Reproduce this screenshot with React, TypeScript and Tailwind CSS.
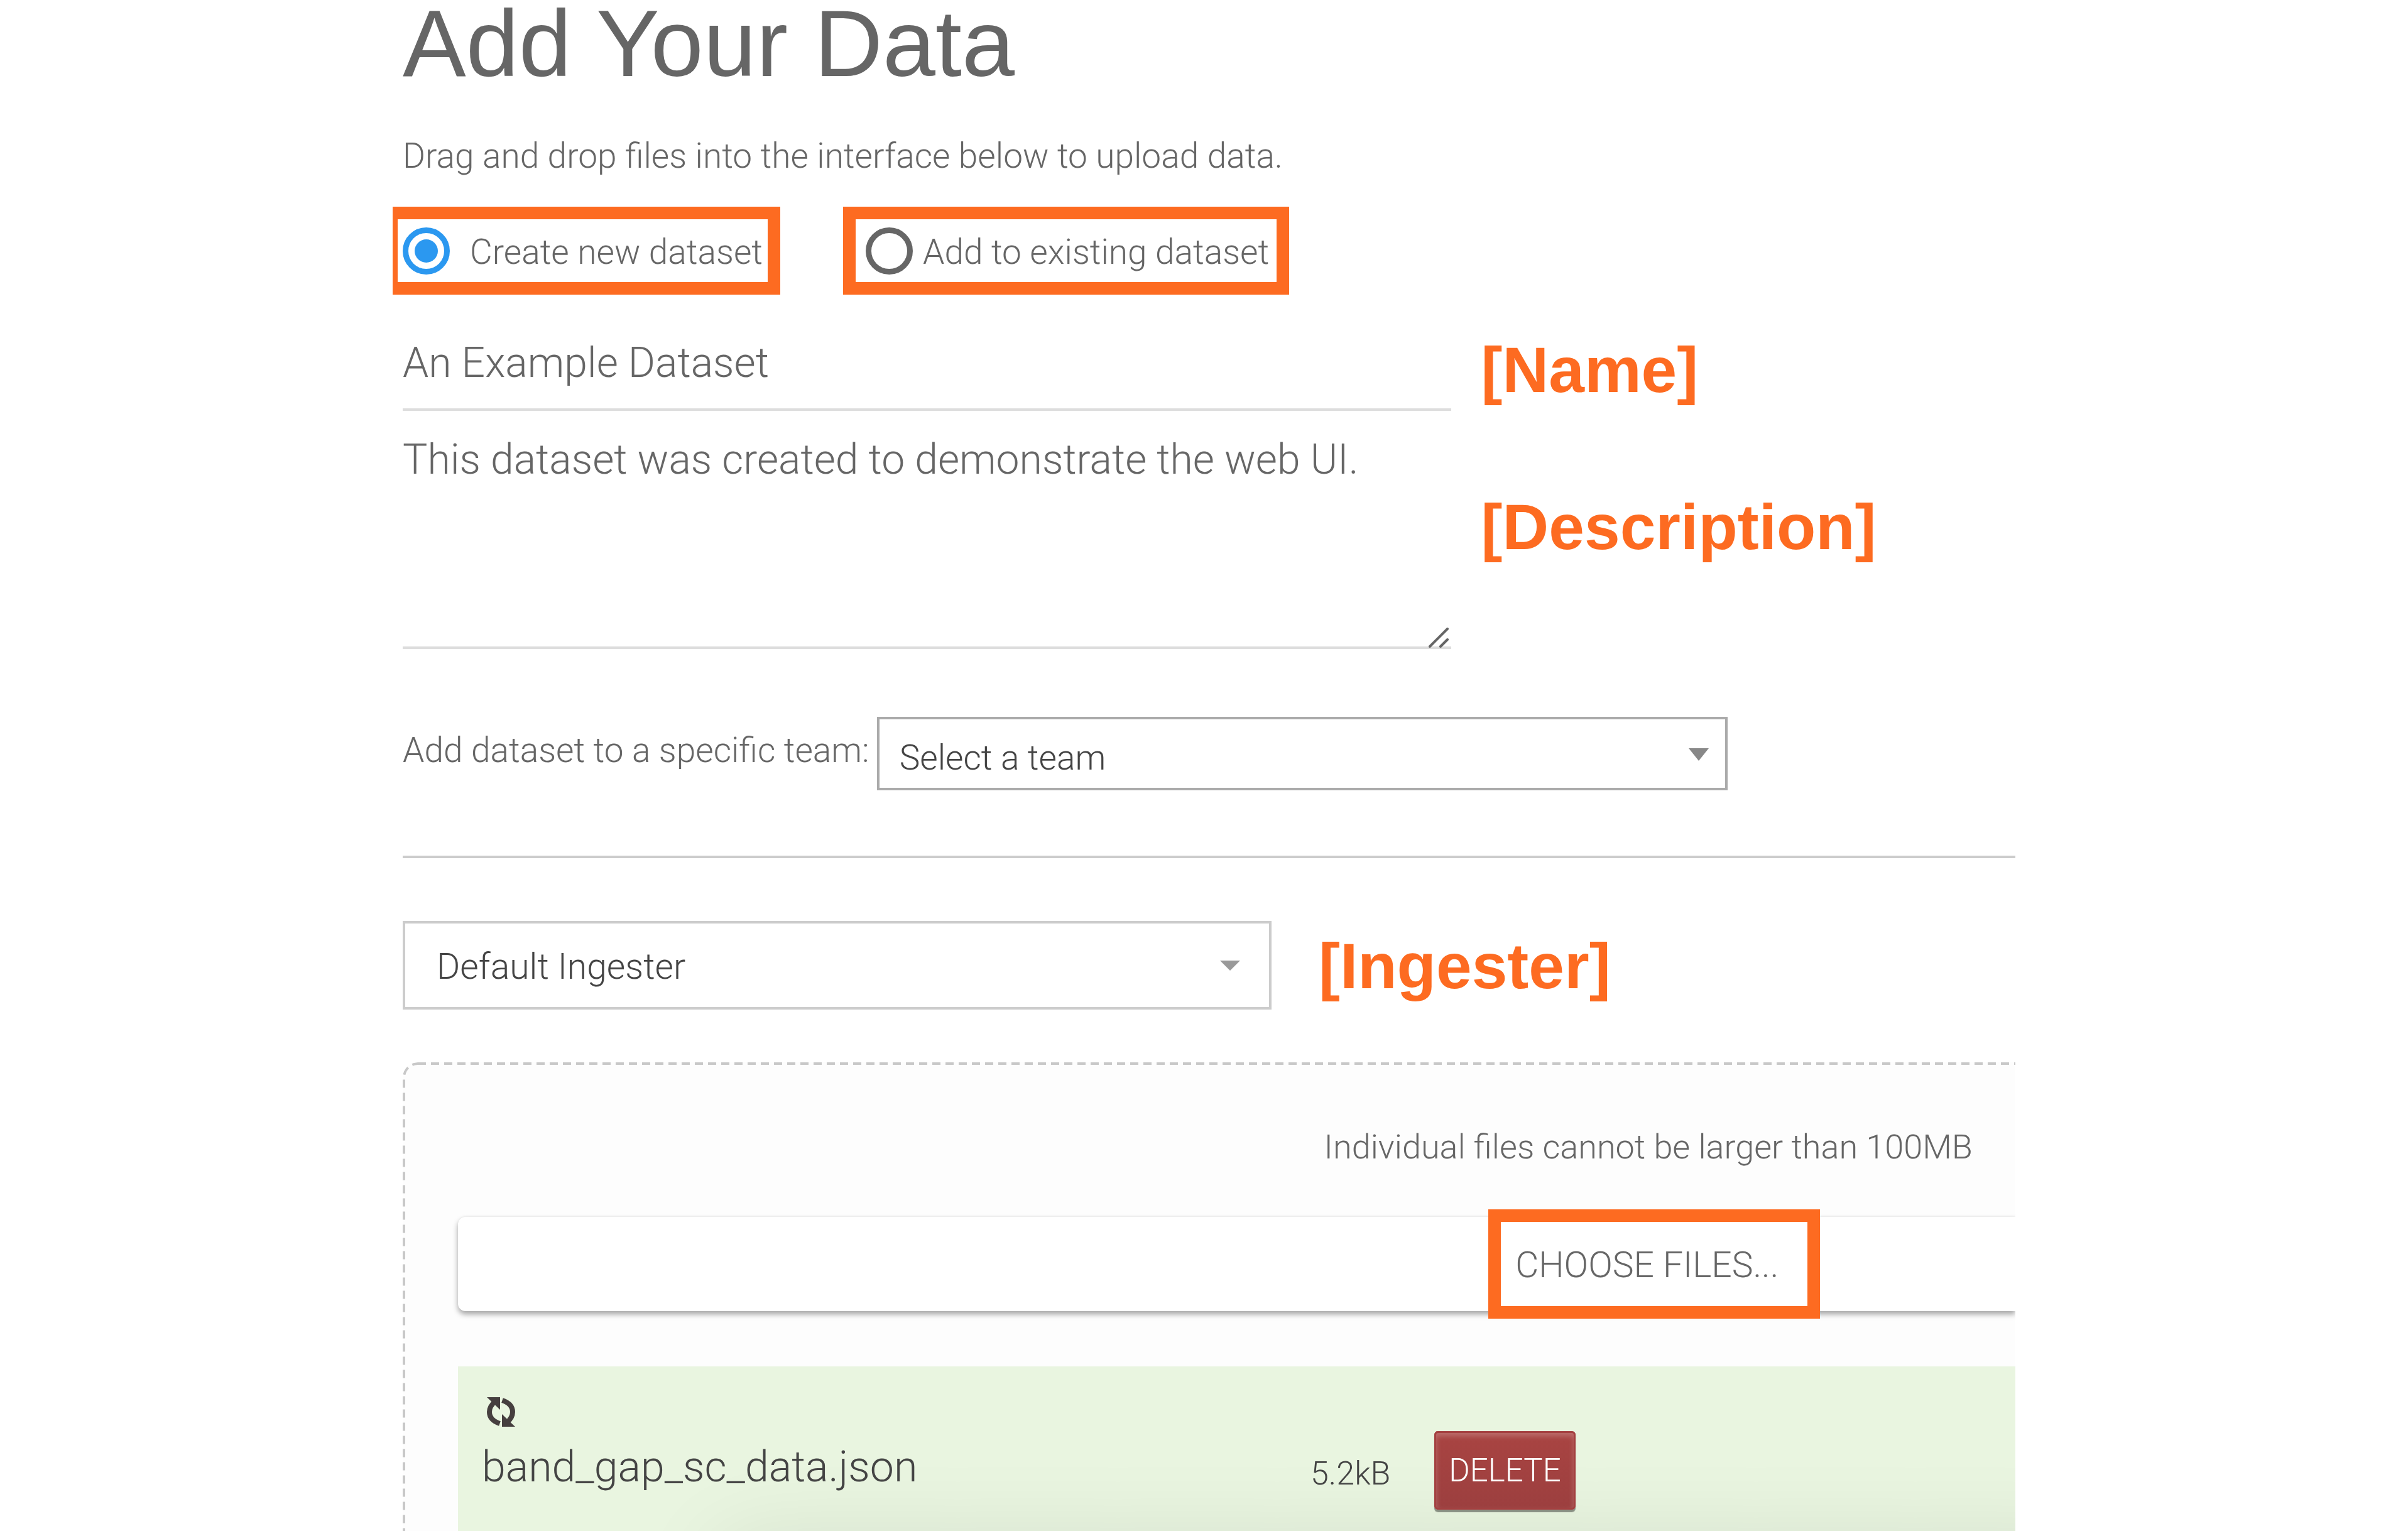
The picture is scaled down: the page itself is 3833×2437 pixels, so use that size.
import React, { useState } from "react";

function Annotation({ children, className }: { children: React.ReactNode; className: string }) {
  return (
    <span
      className={`font-['Liberation_Sans',sans-serif] text-[102px] leading-[104px] font-bold whitespace-nowrap text-[#fd6b21] ${className}`}
    >
      {children}
    </span>
  );
}

function Caret({ className, points }: { className: string; points: string }) {
  return (
    <svg
      aria-hidden="true"
      viewBox="0 0 32 20"
      className={`pointer-events-none absolute h-5 w-8 ${className}`}
    >
      <polygon points={points} fill="currentColor" />
    </svg>
  );
}

function RefreshIcon() {
  return (
    <svg aria-hidden="true" viewBox="0 0 47 47" className="h-[47px] w-[47px] text-[#463f3f]">
      <g fill="none" stroke="currentColor" strokeWidth="8">
        <path d="M21.500 42C10 38 5 31 5 23.500C5 17 8 12 14 7" />
        <path d="M25.500 5C37 9 42 16 42 23.500C42 30 39 35 33 40" />
      </g>
      <polygon points="1,0 22,0 22,20" fill="currentColor" />
      <polygon points="46,47 25,47 25,27" fill="currentColor" />
    </svg>
  );
}

const radioBase =
  "size-[75px] shrink-0 appearance-none rounded-full border-[9px] border-[#666] p-[10px] bg-clip-content checked:border-[#2b98f0] checked:bg-[#2b98f0]";

export default function App() {
  const [mode, setMode] = useState("new");
  const [name, setName] = useState("An Example Dataset");
  const [description, setDescription] = useState(
    "This dataset was created to demonstrate the web UI."
  );

  return (
    <main className="bg-white pr-[625px] pl-[641px] font-['Roboto','Liberation_Sans',sans-serif] text-[55px] leading-[64px] font-light text-[#666]">
      <h1 className="font-['Liberation_Sans',sans-serif] text-[151px] leading-[138px] font-normal">
        Add Your Data
      </h1>
      <p className="mt-[78px]">Drag and drop files into the interface below to upload data.</p>

      <div role="radiogroup" aria-label="Dataset target" className="mt-[49px] -ml-4 flex gap-[100px]">
        <label className="flex h-[140px] items-center gap-8 border-20 border-l-8 border-[#fd6b21] pr-2 pl-2 whitespace-nowrap">
          <input
            type="radio"
            name="mode"
            className={radioBase}
            checked={mode === "new"}
            onChange={() => setMode("new")}
          />
          <span className="pt-1">Create new dataset</span>
        </label>
        <label className="flex h-[140px] items-center gap-4 border-20 border-[#fd6b21] pr-3 pl-4 whitespace-nowrap">
          <input
            type="radio"
            name="mode"
            className={radioBase}
            checked={mode === "existing"}
            onChange={() => setMode("existing")}
          />
          <span className="pt-1">Add to existing dataset</span>
        </label>
      </div>

      <div className="mt-[68px] flex items-start gap-12">
        <input
          type="text"
          aria-label="Name"
          value={name}
          onChange={(e) => setName(e.target.value)}
          className="h-[117px] w-[65%] border-b-4 border-[#ddd] pb-8 text-[66px] leading-[80px] outline-none"
        />
        <Annotation className="">[Name]</Annotation>
      </div>

      <div className="flex items-start gap-12">
        <div className="relative w-[65%]">
          <textarea
            aria-label="Description"
            value={description}
            onChange={(e) => setDescription(e.target.value)}
            className="block h-[379px] w-full resize-none border-b-4 border-[#ddd] pt-[38px] text-[66px] leading-[80px] outline-none"
          />
          <svg
            aria-hidden="true"
            viewBox="0 0 32 32"
            className="pointer-events-none absolute right-1 bottom-0.5 size-8"
          >
            <path
              d="M2 30L30 2M19 30L30 19"
              stroke="#666"
              strokeWidth="4"
              strokeLinecap="round"
              fill="none"
            />
          </svg>
        </div>
        <Annotation className="mt-[133px]">[Description]</Annotation>
      </div>

      <div className="mt-[108px] flex items-start gap-3">
        <label htmlFor="team" className="mt-[21px] whitespace-nowrap">
          Add dataset to a specific team:
        </label>
        <div className="relative w-[1354px]">
          <select
            id="team"
            className="block h-[117px] w-full appearance-none border-4 border-[#aaa] bg-white pt-3 pl-8 text-[#444]"
          >
            <option>Select a team</option>
          </select>
          <Caret className="top-[50px] right-[30px] text-[#888]" points="0,0 32,0 16,20" />
        </div>
      </div>

      <hr className="mt-[104px] border-t-4 border-[#ccc]" />

      <div className="mt-[100px] flex items-start gap-[75px]">
        <div className="relative w-[1383px]">
          <select
            aria-label="Ingester"
            className="block h-[141px] w-full appearance-none border-4 border-[#ccc] bg-white pt-1 pl-[50px] text-[57px] text-[#444]"
          >
            <option>Default Ingester</option>
          </select>
          <Caret className="top-[63px] right-[50px] text-[#999]" points="0,0 32,0 16,16" />
        </div>
        <Annotation className="mt-5">[Ingester]</Annotation>
      </div>

      <section
        aria-label="Upload files"
        className="relative mt-[84px] overflow-hidden rounded-tl-3xl bg-[#fdfdfd] pt-[103px] pl-[88px]"
      >
        <svg aria-hidden="true" className="pointer-events-none absolute inset-0 h-full w-full">
          <rect
            x="2"
            y="2"
            width="110%"
            height="120%"
            rx="22"
            fill="none"
            stroke="#c8c8c8"
            strokeWidth="4"
            strokeDasharray="13 8"
          />
        </svg>
        <p className="pr-[68px] text-right text-[54px]">
          Individual files cannot be larger than 100MB
        </p>

        <button
          type="button"
          className="relative mt-[79px] flex h-[150px] w-full items-center rounded-l-xl bg-white pl-[67.9%] text-[57px] whitespace-nowrap shadow-[0_5px_8px_rgba(0,0,0,0.35),0_-2px_2px_rgba(0,0,0,0.03)]"
        >
          <span className="relative pt-1">
            CHOOSE FILES...
            <span className="absolute -top-[53px] -right-[66px] -bottom-[53px] -left-[43px] border-20 border-[#fd6b21]" />
          </span>
        </button>

        <ul className="relative mt-[88px]">
          <li className="relative grid grid-cols-[1357fr_197fr_925fr] items-start overflow-hidden bg-[#e9f5e0] pb-[61px] text-[#444]">
            <div
              aria-hidden="true"
              className="absolute top-full -right-60 left-[17%] h-60 shadow-[0_0_150px_rgba(0,0,0,0.11)]"
            />
            <div className="relative pt-[49px] pl-[38px]">
              <div className="pl-[7px]">
                <RefreshIcon />
              </div>
              <div className="mt-6 text-[68px] leading-[80px]">band_gap_sc_data.json</div>
            </div>
            <span className="relative mt-[141px] text-[52px] leading-[60px]">5.2kB</span>
            <button
              type="button"
              className="relative mt-[103px] h-[125px] w-[225px] rounded-md bg-linear-to-b from-[#a94442] to-[#9c3f3f] text-[51px] leading-[60px] text-white shadow-[0_4px_1px_rgba(0,0,0,0.4),inset_0_0_0_3px_#a44040,inset_0_5px_8px_3px_rgba(255,255,255,0.22)]"
            >
              DELETE
            </button>
          </li>
        </ul>
      </section>
    </main>
  );
}
